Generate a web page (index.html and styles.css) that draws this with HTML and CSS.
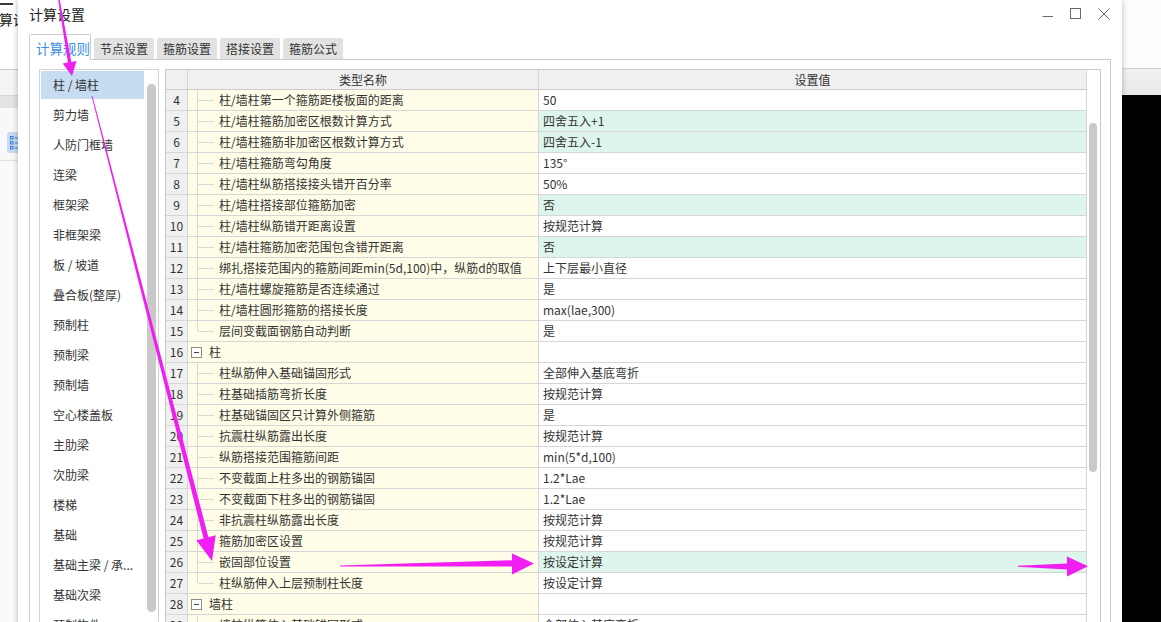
FILE: index.html
```html
<!DOCTYPE html>
<html lang="zh-CN">
<head>
<meta charset="utf-8">
<title>计算设置</title>
<link rel="stylesheet" href="styles.css">
</head>
<body>
<div class="screen">
  <div class="bg-left">
    <div class="bl-top">
      <div class="bl-dash"></div>
      <div class="bl-title">计算设置</div>
    </div>
    <div class="bl-gap"></div>
    <div class="bl-band"></div>
    <div class="bl-tools">
      <svg class="bl-icon" width="14" height="21" viewBox="0 0 14 21">
        <rect x="0" y="0" width="14" height="21" rx="3" fill="#c6daf2"/>
        <rect x="3.5" y="4.5" width="2.5" height="2.5" fill="none" stroke="#3b7dd8" stroke-width="1"/>
        <rect x="3.5" y="9.5" width="2.5" height="2.5" fill="none" stroke="#3b7dd8" stroke-width="1"/>
        <rect x="3.5" y="14.5" width="2.5" height="2.5" fill="none" stroke="#3b7dd8" stroke-width="1"/>
        <path d="M8 6h6M8 11h6M8 16h6" stroke="#3b7dd8" stroke-width="1.2"/>
      </svg>
    </div>
    <div class="bl-rest"></div>
  </div>

  <div class="dialog">
    <div class="titlebar">
      <span class="title">计算设置</span>
      <div class="controls">
        <svg width="12" height="12" viewBox="0 0 12 12"><path d="M0.5 8.5H11" stroke="#6a6a6a" stroke-width="1"/></svg>
        <svg width="12" height="12" viewBox="0 0 12 12"><rect x="0.5" y="0.5" width="10" height="10" fill="none" stroke="#6a6a6a" stroke-width="1"/></svg>
        <svg width="12" height="12" viewBox="0 0 12 12"><path d="M0.5 0.5L11.5 11.5M11.5 0.5L0.5 11.5" stroke="#6a6a6a" stroke-width="1"/></svg>
      </div>
    </div>

    <div class="tabs">
      <div class="tab active">计算规则</div>
      <div class="tab">节点设置</div>
      <div class="tab">箍筋设置</div>
      <div class="tab">搭接设置</div>
      <div class="tab">箍筋公式</div>
    </div>

    <div class="panel">
      <div class="listbox">
        <ul class="items">
          <li class="sel">柱 / 墙柱</li>
          <li>剪力墙</li>
          <li>人防门框墙</li>
          <li>连梁</li>
          <li>框架梁</li>
          <li>非框架梁</li>
          <li>板 / 坡道</li>
          <li>叠合板(整厚)</li>
          <li>预制柱</li>
          <li>预制梁</li>
          <li>预制墙</li>
          <li>空心楼盖板</li>
          <li>主肋梁</li>
          <li>次肋梁</li>
          <li>楼梯</li>
          <li>基础</li>
          <li>基础主梁 / 承...</li>
          <li>基础次梁</li>
          <li>预制构件</li>
        </ul>
        <div class="vscroll"><div class="thumb"></div></div>
      </div>

      <div class="grid">
        <div class="rows">
          <div class="row head"><div class="c c-num"></div><div class="c c-name">类型名称</div><div class="c c-val">设置值</div></div>
          <div class="row"><div class="c c-num">4</div><div class="c c-name t">柱/墙柱第一个箍筋距楼板面的距离</div><div class="c c-val">50</div></div>
          <div class="row"><div class="c c-num">5</div><div class="c c-name t">柱/墙柱箍筋加密区根数计算方式</div><div class="c c-val g">四舍五入+1</div></div>
          <div class="row"><div class="c c-num">6</div><div class="c c-name t">柱/墙柱箍筋非加密区根数计算方式</div><div class="c c-val g">四舍五入-1</div></div>
          <div class="row"><div class="c c-num">7</div><div class="c c-name t">柱/墙柱箍筋弯勾角度</div><div class="c c-val">135°</div></div>
          <div class="row"><div class="c c-num">8</div><div class="c c-name t">柱/墙柱纵筋搭接接头错开百分率</div><div class="c c-val">50%</div></div>
          <div class="row"><div class="c c-num">9</div><div class="c c-name t">柱/墙柱搭接部位箍筋加密</div><div class="c c-val g">否</div></div>
          <div class="row"><div class="c c-num">10</div><div class="c c-name t">柱/墙柱纵筋错开距离设置</div><div class="c c-val">按规范计算</div></div>
          <div class="row"><div class="c c-num">11</div><div class="c c-name t">柱/墙柱箍筋加密范围包含错开距离</div><div class="c c-val g">否</div></div>
          <div class="row"><div class="c c-num">12</div><div class="c c-name t">绑扎搭接范围内的箍筋间距min(5d,100)中，纵筋d的取值</div><div class="c c-val">上下层最小直径</div></div>
          <div class="row"><div class="c c-num">13</div><div class="c c-name t">柱/墙柱螺旋箍筋是否连续通过</div><div class="c c-val">是</div></div>
          <div class="row"><div class="c c-num">14</div><div class="c c-name t">柱/墙柱圆形箍筋的搭接长度</div><div class="c c-val">max(lae,300)</div></div>
          <div class="row"><div class="c c-num">15</div><div class="c c-name t end">层间变截面钢筋自动判断</div><div class="c c-val">是</div></div>
          <div class="row"><div class="c c-num">16</div><div class="c c-name grp"><span class="box"></span>柱</div><div class="c c-val"></div></div>
          <div class="row"><div class="c c-num">17</div><div class="c c-name t">柱纵筋伸入基础锚固形式</div><div class="c c-val">全部伸入基底弯折</div></div>
          <div class="row"><div class="c c-num">18</div><div class="c c-name t">柱基础插筋弯折长度</div><div class="c c-val">按规范计算</div></div>
          <div class="row"><div class="c c-num">19</div><div class="c c-name t">柱基础锚固区只计算外侧箍筋</div><div class="c c-val">是</div></div>
          <div class="row"><div class="c c-num">20</div><div class="c c-name t">抗震柱纵筋露出长度</div><div class="c c-val">按规范计算</div></div>
          <div class="row"><div class="c c-num">21</div><div class="c c-name t">纵筋搭接范围箍筋间距</div><div class="c c-val">min(5*d,100)</div></div>
          <div class="row"><div class="c c-num">22</div><div class="c c-name t">不变截面上柱多出的钢筋锚固</div><div class="c c-val">1.2*Lae</div></div>
          <div class="row"><div class="c c-num">23</div><div class="c c-name t">不变截面下柱多出的钢筋锚固</div><div class="c c-val">1.2*Lae</div></div>
          <div class="row"><div class="c c-num">24</div><div class="c c-name t">非抗震柱纵筋露出长度</div><div class="c c-val">按规范计算</div></div>
          <div class="row"><div class="c c-num">25</div><div class="c c-name t">箍筋加密区设置</div><div class="c c-val">按规范计算</div></div>
          <div class="row"><div class="c c-num">26</div><div class="c c-name t">嵌固部位设置</div><div class="c c-val g">按设定计算</div></div>
          <div class="row"><div class="c c-num">27</div><div class="c c-name t end">柱纵筋伸入上层预制柱长度</div><div class="c c-val">按设定计算</div></div>
          <div class="row"><div class="c c-num">28</div><div class="c c-name grp"><span class="box"></span>墙柱</div><div class="c c-val"></div></div>
          <div class="row"><div class="c c-num">29</div><div class="c c-name t">墙柱纵筋伸入基础锚固形式</div><div class="c c-val">全部伸入基底弯折</div></div>
        </div>
        <div class="gscroll"><div class="gthumb"></div></div>
      </div>
    </div>
  </div>

  <div class="bg-right">
    <div class="br-top"></div>
    <div class="br-band"></div>
    <div class="br-black"></div>
  </div>
</div>

<svg class="marks" width="1161" height="622" viewBox="0 0 1161 622">
  <g fill="#f01ef0">
    <polygon points="58.26,0.13 67.92,62.5 62.74,63.38 72,76 76.54,61.02 71.36,61.9 59.74,-0.13"/>
    <polygon points="91.52,96.12 203.58,538.42 196.32,540.3 212,561 215.68,535.3 208.42,537.17 92.48,95.88"/>
    <polygon points="340,565.5 512,560.3 512,553.5 534,563.5 512,574.5 512,566.5 340,566.5"/>
    <polygon points="1018,565.8 1067,563.5 1067,556.5 1088,566.2 1067,576.5 1067,569.5 1018,566.8"/>
  </g>
</svg>
</body>
</html>
```

FILE: styles.css
```css
* { box-sizing: border-box; }

html, body {
  margin: 0;
  padding: 0;
}

body {
  width: 1161px;
  height: 622px;
  overflow: hidden;
  position: relative;
  background: #fff;
  font-family: "Noto Sans CJK SC", "Microsoft YaHei", "Noto Sans", sans-serif;
  font-size: 12px;
  color: #333;
}

.screen {
  display: flex;
  height: 700px;
}

/* ---------- background window, left ---------- */
.bg-left {
  width: 18px;
  flex: none;
  display: flex;
  flex-direction: column;
  overflow: hidden;
  background: #f9f9f9;
}
.bl-top {
  height: 70px;
  flex: none;
  background: #fff;
  border-bottom: 1px solid #c9c9c9;
}
.bl-dash {
  width: 13px;
  height: 2px;
  margin-top: 3px;
  background: #3a3a3a;
}
.bl-title {
  margin-top: 5px;
  margin-left: -15px;
  font-size: 14px;
  line-height: 18px;
  white-space: nowrap;
  color: #222;
}
.bl-gap {
  height: 25px;
  flex: none;
  background: #f5f5f5;
}
.bl-band {
  height: 13px;
  flex: none;
  background: #e4e4e4;
  border-top: 1px solid #d6d6d6;
}
.bl-tools {
  height: 52px;
  flex: none;
  background: #f8f8f8;
  padding: 24px 0 0 7px;
}
.bl-icon { display: block; }
.bl-rest {
  flex: 1;
  border-top: 1px solid #e2e2e2;
  background: #fafafa;
}

/* ---------- dialog ---------- */
.dialog {
  width: 1104px;
  flex: none;
  position: relative;
  z-index: 2;
  background: #fff;
  box-shadow: 0 0 6px rgba(0, 0, 0, 0.28);
  display: flex;
  flex-direction: column;
}

.titlebar {
  height: 28px;
  flex: none;
  display: flex;
  align-items: center;
  justify-content: space-between;
  padding: 0 12px 0 11px;
}
.title {
  font-size: 14px;
  color: #222;
  line-height: 18px;
}
.controls {
  display: flex;
  gap: 16px;
  align-items: center;
}
.controls svg { display: block; }

.tabs {
  height: 31px;
  flex: none;
  display: flex;
  align-items: flex-end;
  gap: 3px;
  padding-left: 11px;
}
.tab {
  width: 60px;
  height: 21px;
  background: #e2e2e2;
  border-radius: 2px 2px 0 0;
  padding-left: 6px;
  line-height: 21px;
  font-size: 12px;
  color: #333;
  white-space: nowrap;
}
.tab.active {
  width: 62px;
  height: 26px;
  margin-bottom: -1px;
  position: relative;
  z-index: 1;
  background: #fff;
  border: 1px solid #cdcdcd;
  border-bottom: none;
  padding: 2px 0 0 6px;
  line-height: 22px;
  font-size: 13.5px;
  color: #3d8ee6;
}

.panel {
  flex: 1;
  min-height: 0;
  margin: 0 11px;
  border: 1px solid #cacaca;
  border-bottom: none;
  padding: 9px 9px 0;
  display: flex;
  gap: 6px;
  overflow: hidden;
}

/* ---------- left list ---------- */
.listbox {
  width: 120px;
  flex: none;
  border: 1px solid #d2d2d2;
  padding: 1px 2px 0 1px;
  display: flex;
  gap: 3px;
  overflow: hidden;
}
.items {
  list-style: none;
  margin: 0;
  padding: 0;
  width: 103px;
  flex: none;
}
.items li {
  height: 28px;
  line-height: 28px;
  margin-bottom: 2px;
  padding-left: 12px;
  white-space: nowrap;
  overflow: hidden;
  color: #333;
}
.items li.sel {
  background: #c6dcf1;
}
.vscroll {
  width: 9px;
  flex: none;
}
.thumb {
  margin-top: 13px;
  height: 528px;
  background: #c9c9c9;
  border-radius: 5px;
}

/* ---------- property grid ---------- */
.grid {
  width: 936px;
  flex: none;
  border: 1px solid #c8c8c8;
  display: flex;
  overflow: hidden;
}
.rows {
  width: 921px;
  flex: none;
}
.row {
  display: flex;
  height: 21px;
  border-bottom: 1px solid #d6d6d6;
}
.c {
  line-height: 20px;
  border-right: 1px solid #d6d6d6;
  white-space: nowrap;
  overflow: visible;
}
.c-num {
  width: 22px;
  flex: none;
  background: #f0f0f0;
  text-align: center;
}
.c-name {
  width: 351px;
  flex: none;
  background: #fffde8;
  position: relative;
  padding-left: 31px;
}
.c-val {
  width: 548px;
  flex: none;
  background: #fff;
  padding-left: 4px;
}
.c-val.g { background: #ddf5ec; }

.row.head {
  height: 20px;
  border-bottom-color: #cccccc;
}
.row.head .c {
  line-height: 19px;
  background: #f0f0f0;
  text-align: center;
  padding-left: 0;
}

.c-name.t::before {
  content: "";
  position: absolute;
  left: 9px;
  top: 0;
  bottom: -1px;
  border-left: 1px solid #d8d8d8;
}
.c-name.t.end::before {
  bottom: 10px;
}
.c-name.t::after {
  content: "";
  position: absolute;
  left: 10px;
  top: 10px;
  width: 16px;
  border-top: 1px solid #d8d8d8;
}

.c-name.grp {
  display: flex;
  align-items: center;
  gap: 7px;
  padding-left: 3px;
}
.box {
  width: 11px;
  height: 11px;
  flex: none;
  border: 1px solid #8c8c8c;
  background: #fff;
  display: flex;
  align-items: center;
  justify-content: center;
}
.box::after {
  content: "";
  width: 5px;
  border-top: 1px solid #444;
}

.gscroll {
  width: 13px;
  flex: none;
  background: #fff;
}
.gthumb {
  margin: 53px 0 0 2px;
  width: 8px;
  height: 349px;
  background: #c9c9c9;
  border-radius: 4px;
}

/* ---------- background, right ---------- */
.bg-right {
  flex: 1;
  display: flex;
  flex-direction: column;
}
.br-top {
  height: 69px;
  flex: none;
  background: #fdfdfd;
  border-bottom: 1px solid #d2d2d2;
}
.br-band {
  height: 26px;
  flex: none;
  background: linear-gradient(#f2f2f2, #e8e8e8);
}
.br-black {
  flex: 1;
  background: #000;
}

/* ---------- annotation overlay ---------- */
.marks {
  position: absolute;
  left: 0;
  top: 0;
  z-index: 10;
  pointer-events: none;
}
```
